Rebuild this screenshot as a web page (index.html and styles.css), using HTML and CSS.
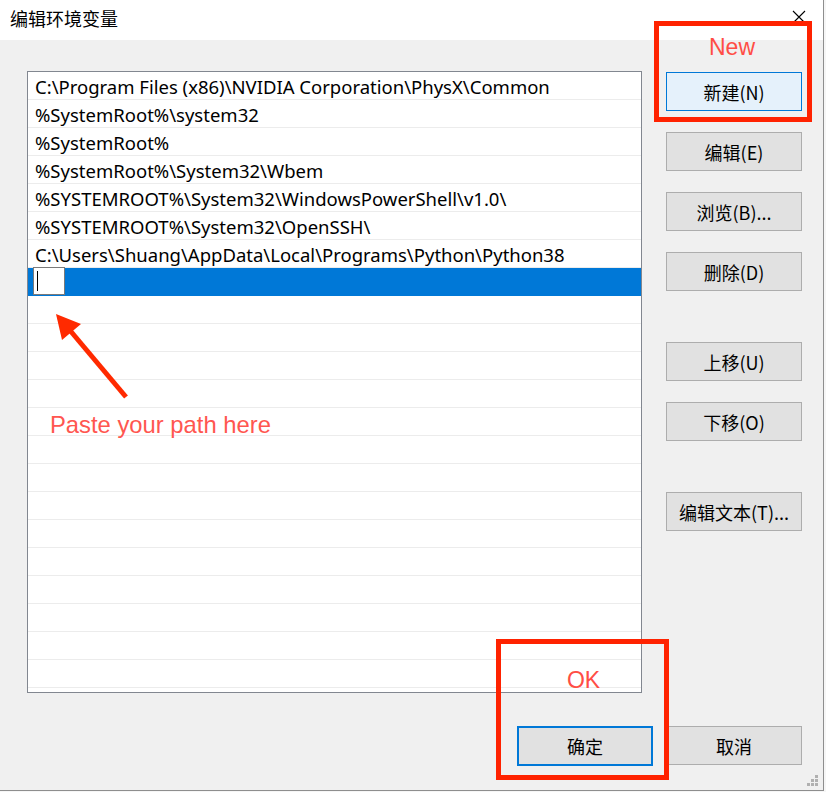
FILE: index.html
```html
<!DOCTYPE html>
<html lang="zh">
<head>
<meta charset="utf-8">
<link rel="stylesheet" href="styles.css">
</head>
<body>
<div class="window">
  <div class="titlebar">
    <span class="title">编辑环境变量</span>
    <svg class="close" width="14" height="14" viewBox="0 0 14 14"><path d="M1 1L13 13M13 1L1 13" stroke="#000" stroke-width="1.1"/></svg>
  </div>
  <div class="body">
    <div class="main">
      <div class="listbox">
        <div class="row">C:\Program Files (x86)\NVIDIA Corporation\PhysX\Common</div>
        <div class="row">%SystemRoot%\system32</div>
        <div class="row">%SystemRoot%</div>
        <div class="row">%SystemRoot%\System32\Wbem</div>
        <div class="row">%SYSTEMROOT%\System32\WindowsPowerShell\v1.0\</div>
        <div class="row">%SYSTEMROOT%\System32\OpenSSH\</div>
        <div class="row">C:\Users\Shuang\AppData\Local\Programs\Python\Python38</div>
        <div class="row selected"><span class="editbox"><span class="caret"></span></span></div>
        <div class="row"></div><div class="row"></div><div class="row"></div><div class="row"></div>
        <div class="row"></div><div class="row"></div><div class="row"></div><div class="row"></div>
        <div class="row"></div><div class="row"></div><div class="row"></div><div class="row"></div>
        <div class="row"></div><div class="row"></div>
        <svg class="arrow" width="110" height="90" viewBox="0 0 110 90">
          <line x1="98" y1="85" x2="40" y2="16" stroke="#ff2a00" stroke-width="5"/>
          <polygon points="28,2 34,28 53,12" fill="#ff2a00"/>
        </svg>
        <div class="note">Paste your path here</div>
      </div>
      <div class="side">
        <button class="btn focus">新建(N)</button>
        <button class="btn">编辑(E)</button>
        <button class="btn">浏览(B)...</button>
        <button class="btn">删除(D)</button>
        <button class="btn group">上移(U)</button>
        <button class="btn">下移(O)</button>
        <button class="btn group">编辑文本(T)...</button>
      </div>
    </div>
    <div class="footer">
      <button class="btn default">确定</button>
      <button class="btn">取消</button>
    </div>
  </div>
  <div class="mark mark-new"><span>New</span></div>
  <div class="mark mark-ok"><span>OK</span></div>
  <svg class="grip" width="12" height="12" viewBox="0 0 12 12" fill="#b0b0b0">
    <rect x="8" y="0" width="3" height="3"/>
    <rect x="4" y="4" width="3" height="3"/><rect x="8" y="4" width="3" height="3"/>
    <rect x="0" y="8" width="3" height="3"/><rect x="4" y="8" width="3" height="3"/><rect x="8" y="8" width="3" height="3"/>
  </svg>
</div>
</body>
</html>
```

FILE: styles.css
```css
* { box-sizing: border-box; }
html, body { margin: 0; padding: 0; background: #f6f6f6; }
body {
  width: 826px; height: 792px; overflow: hidden;
  font-family: "Noto Sans", "Noto Sans CJK SC", sans-serif;
  color: #000;
}
.window {
  position: relative;
  width: 824px; height: 791px;
  background: #f0f0f0;
  border-right: 1px solid #8e8e8e;
  border-bottom: 1px solid #8e8e8e;
}
.titlebar {
  height: 40px; background: #fff;
  display: flex; align-items: center; justify-content: space-between;
  padding: 0 17px 4px 10px;
}
.title { font-family: "Noto Sans CJK SC", sans-serif; font-size: 18px; }
.close { margin-top: -2px; }
.body { padding: 31px 0 0 27px; }
.main { display: flex; gap: 24px; }
.listbox {
  position: relative;
  width: 615px; height: 622px;
  background: #fff;
  border: 1px solid #828790;
  overflow: hidden;
}
.row {
  height: 28px; line-height: 29px;
  padding-left: 7px;
  border-bottom: 1px solid #ececec;
  font-size: 18.5px; white-space: nowrap;
}
.row.selected { background: #0078d7; border-bottom-color: #0078d7; padding-left: 5px; display: flex; align-items: center; }
.editbox {
  width: 32px; height: 28px; margin-top: -1px;
  background: #fff; border: 1px solid #7a7a7a;
  display: flex; align-items: center; padding-left: 3px;
}
.caret { width: 1px; height: 20px; background: #000; }
.arrow { position: absolute; left: 0; top: 240px; overflow: visible; }
.note {
  position: absolute; left: 22px; top: 339px;
  font-family: "Liberation Sans", sans-serif; font-size: 23.8px;
  color: #ff5650;
}
.side { display: flex; flex-direction: column; gap: 21px; padding-top: 1px; }
.btn {
  width: 136px; height: 39px;
  background: #e1e1e1; border: 1px solid #adadad;
  font-family: "Noto Sans CJK SC", sans-serif; font-size: 18px; color: #000;
  padding: 0; margin: 0;
}
.btn.focus { background: #e5f1fb; border-color: #0078d7; }
.btn.group { margin-top: 30px; }
.btn.default { border: 2px solid #0078d7; width: 136px; height: 40px; }
.footer { display: flex; gap: 13px; padding: 33px 0 0 490px; }
.mark {
  position: absolute; border: 5px solid #ff2200;
  display: flex; justify-content: center;
  font-family: "Liberation Sans", sans-serif; font-size: 23px; color: #ff4d45;
}
.mark-new { left: 654px; top: 21px; width: 158px; height: 101px; }
.mark-new span { margin-top: 8px; margin-left: -2px; }
.mark-ok { left: 496px; top: 639px; width: 173px; height: 141px; }
.mark-ok span { margin-top: 23px; margin-left: 2px; }
.grip { position: absolute; right: 4px; bottom: 3px; }
```
